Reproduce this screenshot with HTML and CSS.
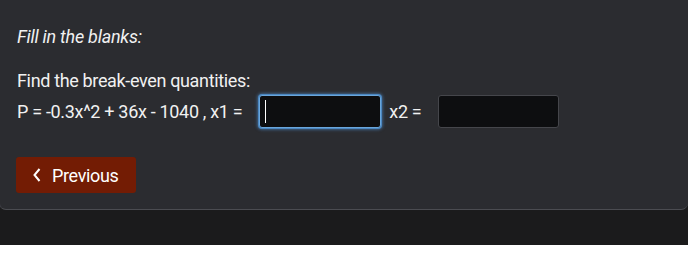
FILE: index.html
```html
<!DOCTYPE html>
<html>
<head>
<meta charset="utf-8">
<link rel="stylesheet" href="styles.css">
</head>
<body>
<div class="page">
  <div class="card">
    <p class="instructions">Fill in the blanks:</p>
    <p class="question">Find the break-even quantities:</p>
    <div class="row">
      <span class="label">P = -0.3x^2 + 36x - 1040 , x1 =</span>
      <span class="blank focused"><span class="caret"></span></span>
      <span class="label label-x2">x2 =</span>
      <span class="blank"></span>
    </div>
    <div class="actions">
      <button class="btn-prev">
        <svg class="chev" width="10" height="14" viewBox="0 0 10 14"><polyline points="7.5,1 2.5,7 7.5,13" fill="none" stroke="#fff" stroke-width="2"/></svg>
        <span>Previous</span>
      </button>
    </div>
  </div>
</div>
</body>
</html>
```
FILE: styles.css
```css
html, body {
  margin: 0;
  padding: 0;
  background: #ffffff;
}
body {
  font-family: Roboto, "Liberation Sans", sans-serif;
  font-size: 18px;
  color: #f1f1f1;
}
.page {
  height: 245px;
  background: #1b1b1c;
  overflow: hidden;
}
.card {
  background: #2b2c30;
  border-bottom: 1px solid #4b4c51;
  border-left: 1px solid #3a3b40;
  border-radius: 0 0 7px 7px;
  margin-left: -1px;
  padding: 25px 16px 16px 17px;
}
.instructions {
  margin: 0;
  line-height: 24px;
  font-style: italic;
  letter-spacing: -0.25px;
}
.question {
  margin: 20px 0 0 0;
  line-height: 24px;
  letter-spacing: -0.35px;
}
.row {
  display: flex;
  align-items: center;
  margin-top: 1px;
  height: 35px;
}
.label {
  line-height: 24px;
  letter-spacing: -0.32px;
  white-space: pre;
}
.blank {
  display: block;
  box-sizing: border-box;
  width: 121px;
  height: 33px;
  background: #0d0e10;
  border: 1px solid #45464b;
  border-radius: 3px;
  position: relative;
}
.blank.focused {
  width: 122px;
  margin-left: 17px;
  border-color: #6aa6db;
  box-shadow: 0 0 0 1px #4a86c0, 0 0 3px 2px rgba(80, 140, 200, 0.55);
}
.caret {
  position: absolute;
  left: 5px;
  top: 4px;
  width: 1px;
  height: 23px;
  background: #ffffff;
}
.label-x2 {
  margin: 0 17px 0 8px;
}
.actions {
  margin-top: 28px;
  display: flex;
}
.btn-prev {
  display: flex;
  align-items: center;
  height: 36px;
  box-sizing: border-box;
  padding: 0 17px 0 16px;
  margin-left: -1px;
  background: #731c04;
  border: none;
  border-radius: 3px;
  color: #ffffff;
  font-family: Roboto, "Liberation Sans", sans-serif;
  font-size: 18px;
  letter-spacing: -0.35px;
}
.chev {
  margin-right: 10px;
}
```
